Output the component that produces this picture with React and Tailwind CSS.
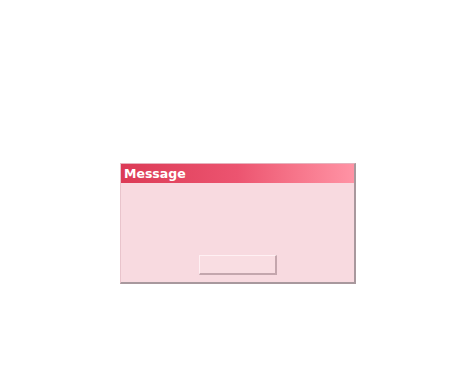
export default function App() {
  return (
    <div className="w-[474px] h-[379px] bg-white pt-[163px] pl-[120px]" style={{ fontFamily: '"DejaVu Sans", sans-serif' }}>
      <div className="w-[236px] h-[121px] flex flex-col bg-[#f8dae0] border-l border-t border-l-[#e9c4cc] border-t-[#e6b2bd] border-r-2 border-b-2 border-r-[#a8989d] border-b-[#a8989d]">
        <div className="h-[19px] flex items-center pl-[3px] pt-[1px] bg-gradient-to-r from-[#dc3a56] via-[#ec5470] to-[#ff93a5]">
          <span className="text-white font-bold text-[12.5px] leading-none">Message</span>
        </div>
        <div className="flex-1 flex items-end justify-center pb-[7px]">
          <div className="w-[78px] h-[20px] bg-[#f9dde2] border-t border-l border-t-[#fff0f3] border-l-[#fff0f3] border-r-2 border-b-2 border-r-[#c4a6ad] border-b-[#c4a6ad]" />
        </div>
      </div>
    </div>
  );
}
